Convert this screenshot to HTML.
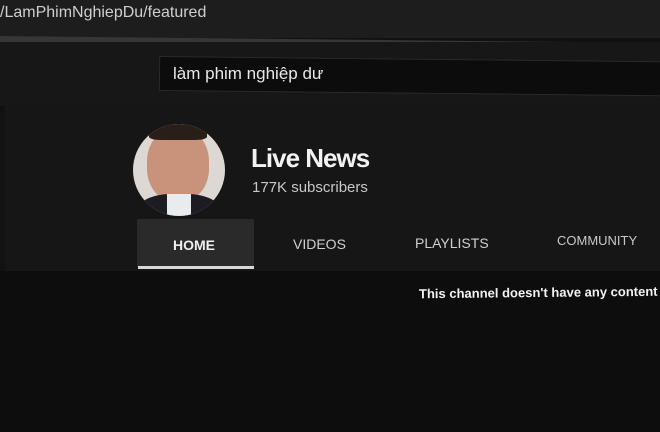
<!DOCTYPE html>
<html><head><meta charset="utf-8"><style>
*{margin:0;padding:0;box-sizing:border-box}
body{width:660px;height:432px;overflow:hidden;background:#111;font-family:"Liberation Sans","Noto Sans CJK JP",sans-serif;position:relative}
.a{position:absolute}
</style></head><body>
<div class="a" style="left:0;top:0;width:660px;height:38px;background:#1d1d1d"></div>
<div class="a" style="left:0;top:36px;width:660px;height:6px;background:#363636;transform:rotate(0.6deg);transform-origin:left"></div>
<div class="a" style="left:0;top:42px;width:660px;height:64px;background:#171717"></div>
<div class="a" style="left:0;top:4px;color:#cfcfcf;font-size:16px;">/LamPhimNghiepDu/featured</div>
<div class="a" style="left:159px;top:56px;width:510px;height:35px;background:#0c0c0c;border:1px solid #2a2a2a;transform:rotate(0.6deg);transform-origin:left"></div>
<div class="a" style="left:173px;top:64px;color:#e8e8e8;font-size:17px;">làm phim nghiệp dư</div>
<div class="a" style="left:5px;top:106px;width:655px;height:165px;background:#161616"></div>
<div class="a" style="left:0;top:271px;width:660px;height:161px;background:#0d0d0d"></div>
<div class="a" style="left:133px;top:124px;width:92px;height:92px;border-radius:50%;background:#ddd8d3;overflow:hidden">
  <div class="a" style="left:14px;top:4px;width:62px;height:74px;border-radius:45%;background:#c8937a"></div>
  <div class="a" style="left:16px;top:0;width:58px;height:16px;border-radius:50% 50% 20% 20%;background:#2a1e18"></div>
  <div class="a" style="left:5px;top:70px;width:82px;height:40px;border-radius:40% 40% 0 0;background:#1c1c22"></div>
  <div class="a" style="left:34px;top:70px;width:24px;height:24px;background:#e9ecef"></div>
</div>
<div class="a" style="left:251px;top:143px;color:#f2f2f2;font-size:26px;font-weight:bold;letter-spacing:-1px">Live News</div>
<div class="a" style="left:252px;top:179px;color:#c8c8c8;font-size:15px;">177K subscribers</div>
<div class="a" style="left:137px;top:219px;width:117px;height:48px;background:#2a2a2a"></div>
<div class="a" style="left:138px;top:266px;width:116px;height:3px;background:#d8d8d8"></div>
<div class="a" style="left:173px;top:237px;color:#f0f0f0;font-size:14px;font-weight:bold">HOME</div>
<div class="a" style="left:293px;top:236px;color:#d0d0d0;font-size:14px;">VIDEOS</div>
<div class="a" style="left:415px;top:235px;color:#d0d0d0;font-size:14px;">PLAYLISTS</div>
<div class="a" style="left:557px;top:233px;color:#c8c8c8;font-size:13px;">COMMUNITY</div>
<div class="a" style="left:419px;top:285px;color:#f2f2f2;font-size:13px;font-weight:bold;transform:rotate(-0.6deg)">This channel doesn't have any content</div>
</body></html>
